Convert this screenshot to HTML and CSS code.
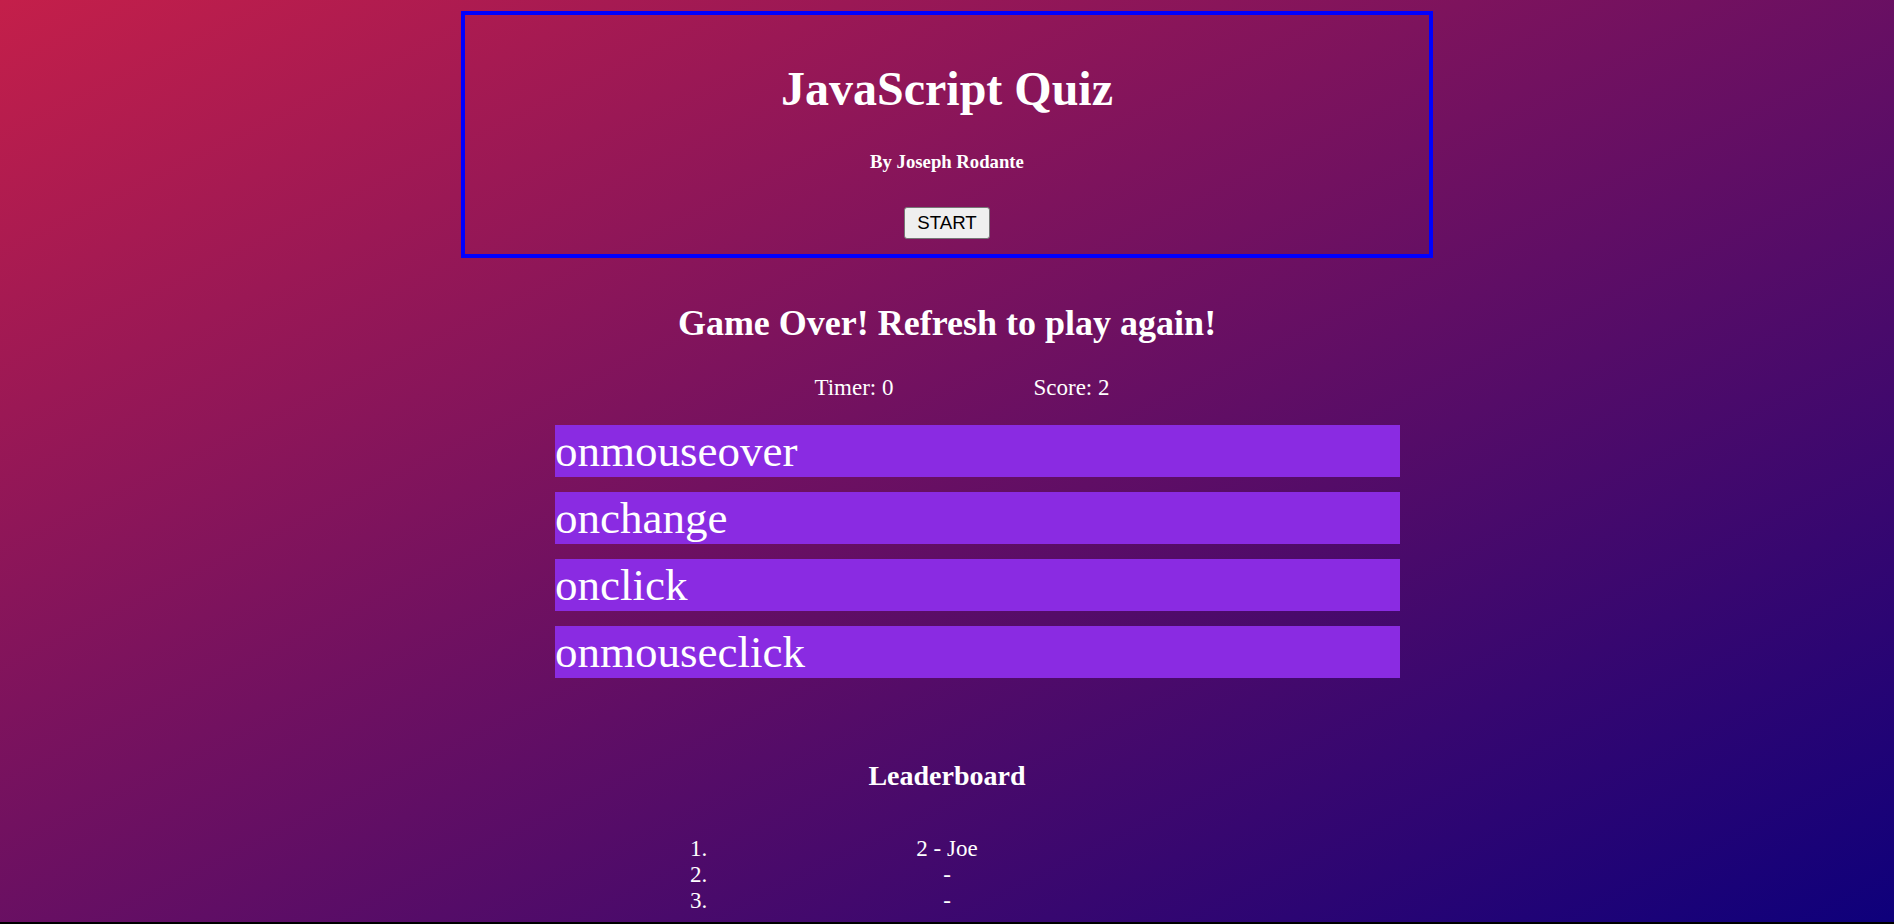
FILE: index.html
```html
<!DOCTYPE html>
<html lang="en">
<head>
<meta charset="utf-8">
<title>JavaScript Quiz</title>
<link rel="stylesheet" href="styles.css">
</head>
<body>
  <header class="intro">
    <h1 class="intro-title">JavaScript Quiz</h1>
    <h3 class="intro-author">By Joseph Rodante</h3>
    <div class="intro-actions">
      <button class="start-btn" type="button">START</button>
    </div>
  </header>

  <main class="quiz">
    <h2 class="question">Game Over! Refresh to play again!</h2>
    <div class="stats">
      <span class="stat">Timer: 0</span>
      <span class="stat">Score: 2</span>
    </div>
    <div class="choices">
      <div class="choice">onmouseover</div>
      <div class="choice">onchange</div>
      <div class="choice">onclick</div>
      <div class="choice">onmouseclick</div>
    </div>
  </main>

  <section class="leaderboard">
    <h3 class="leaderboard-title">Leaderboard</h3>
    <ol class="leaderboard-list">
      <li>2 - Joe</li>
      <li>-</li>
      <li>-</li>
    </ol>
  </section>
</body>
</html>
```

FILE: styles.css
```css
html {
  background: #000;
  margin: 0;
  padding: 0;
}

body {
  margin: 0;
  height: 922px;
  overflow: hidden;
  background: linear-gradient(to bottom right, #c41f4a, #0e007b);
  color: #fff;
  font-family: "Liberation Serif", "Times New Roman", serif;
  text-align: center;
}

.intro {
  width: 964px;
  margin: 11px auto 0;
  border: 4px solid #0000ff;
  padding: 0 0 15px;
}

.intro-title {
  margin: 46px 0 0;
  font-size: 48px;
  font-weight: bold;
  line-height: normal;
}

.intro-author {
  margin: 35px 0 0;
  font-size: 18.72px;
  font-weight: bold;
  line-height: normal;
}

.intro-actions {
  margin-top: 34px;
  display: flex;
  justify-content: center;
}

.start-btn {
  font-family: "Liberation Sans", Arial, sans-serif;
  font-size: 18.67px;
  line-height: normal;
  color: #000;
  background: #efefef;
  border: 1px solid #767676;
  border-radius: 3px;
  padding: 4px 12px;
  margin: 0;
}

.question {
  margin: 44px 0 0;
  font-size: 36px;
  font-weight: bold;
  line-height: normal;
}

.stats {
  margin-top: 31px;
  display: flex;
  justify-content: center;
  gap: 140px;
  padding-left: 30px;
  font-size: 23px;
  line-height: normal;
}

.choices {
  margin: 24px 0 0 calc(50% - 392px);
  width: 845px;
  display: flex;
  flex-direction: column;
  gap: 15px;
}

.choice {
  background: #8a2be2;
  font-size: 45px;
  line-height: normal;
  text-align: left;
}

.leaderboard-title {
  margin: 82px 0 0;
  font-size: 28px;
  font-weight: bold;
  line-height: normal;
}

.leaderboard-list {
  width: 468px;
  margin: 44px auto 0;
  padding: 0 40px;
  font-size: 23px;
  line-height: normal;
}
```
